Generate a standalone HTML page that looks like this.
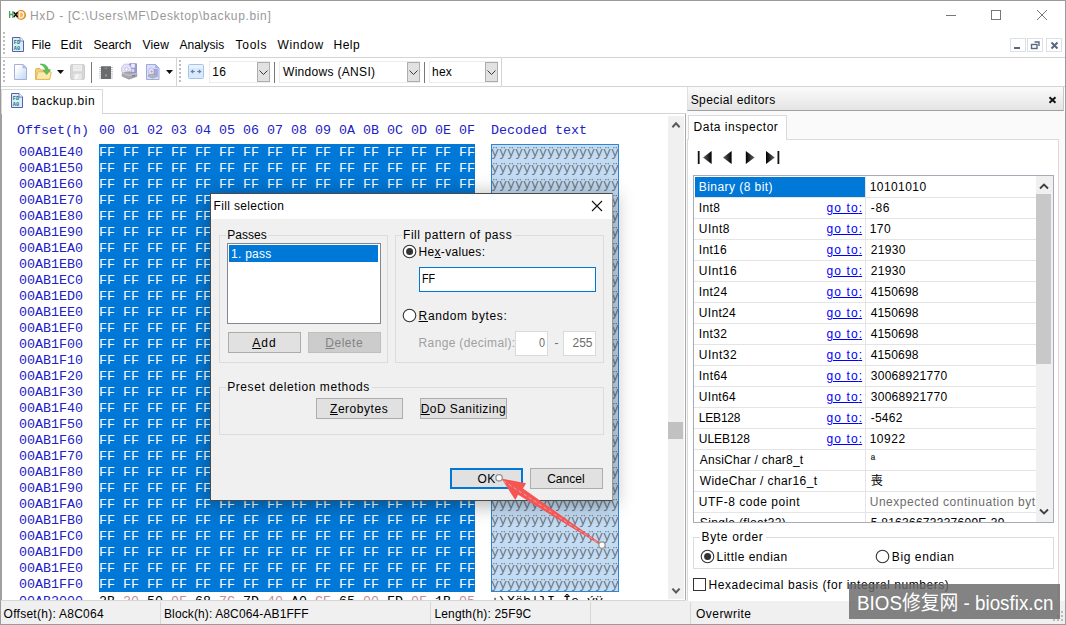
<!DOCTYPE html>
<html><head><meta charset="utf-8"><title>HxD</title>
<style>
html,body{margin:0;padding:0;}
body{width:1066px;height:625px;overflow:hidden;background:#fff;position:relative;font-family:"Liberation Sans","Noto Sans CJK SC",sans-serif;font-size:12px;color:#000;}
body div,body span.t,body svg{position:absolute;box-sizing:border-box;}
.t{white-space:pre;}
.m{font-family:"Liberation Mono",monospace;}
u{text-decoration:underline;text-underline-offset:1px;}
</style></head><body>
<div style="left:0px;top:0px;width:1066px;height:625px;border:1px solid #9b9b9b;background:#fff;"></div>
<span class="t" style="left:30.00px;top:9.00px;font-size:12px;line-height:14px;color:#999;letter-spacing:0.649px;">HxD - [C:\Users\MF\Desktop\backup.bin]</span>
<svg style="left:8px;top:8px" width="19" height="14" viewBox="8 8 19 14"><circle cx="21.1" cy="14.9" r="4.3" fill="#f3b35a" stroke="#e08a1c" stroke-width="1.3"/><path d="M9.6 11 V18 M12.9 11 V18 M9.6 14.5 H12.9" stroke="#4aa65a" stroke-width="1.3" fill="none"/><path d="M13.8 12.3 L17.6 17 M17.6 12.3 L13.8 17" stroke="#111" stroke-width="1.5"/><path d="M19.6 11.8 V17.8 H21 Q23.6 17.6 23.6 14.8 Q23.6 12 21 11.8 Z" fill="none" stroke="#f4f4f4" stroke-width="1.2"/></svg>
<svg style="left:940px;top:5px" width="120" height="22" viewBox="0 0 120 22"><path d="M6 10.5 H16" stroke="#777" stroke-width="1" fill="none"/><rect x="51.5" y="5.5" width="9" height="9" stroke="#777" fill="none"/><path d="M97 5 L107 15 M107 5 L97 15" stroke="#777" stroke-width="1" fill="none"/></svg>
<div style="left:1px;top:57px;width:1064px;height:1px;background:#d4d4d4;"></div>
<div style="left:3px;top:32px;width:2px;height:2px;background:#bdbdbd;"></div>
<div style="left:3px;top:36px;width:2px;height:2px;background:#bdbdbd;"></div>
<div style="left:3px;top:40px;width:2px;height:2px;background:#bdbdbd;"></div>
<div style="left:3px;top:44px;width:2px;height:2px;background:#bdbdbd;"></div>
<div style="left:3px;top:48px;width:2px;height:2px;background:#bdbdbd;"></div>
<div style="left:3px;top:52px;width:2px;height:2px;background:#bdbdbd;"></div>
<svg style="left:12px;top:37px" width="12" height="15" viewBox="0 0 12 15"><path d="M0.5 0.5 H8 L11.5 4 V14.5 H0.5 Z" fill="#dcebf9" stroke="#5a5fb0"/><path d="M8 0.5 V4 H11.5" fill="#fff" stroke="#5a5fb0" stroke-width="0.8"/><text x="1.8" y="7.3" font-size="5.2" font-weight="bold" fill="#0a7a70" font-family="Liberation Mono,monospace">FD</text><text x="1.8" y="12.6" font-size="5.2" font-weight="bold" fill="#0a7a70" font-family="Liberation Mono,monospace">A0</text></svg>
<span class="t" style="left:31.50px;top:38.00px;font-size:12px;line-height:14px;color:#000;">File</span>
<span class="t" style="left:60.50px;top:38.00px;font-size:12px;line-height:14px;color:#000;letter-spacing:0.333px;">Edit</span>
<span class="t" style="left:93.50px;top:38.00px;font-size:12px;line-height:14px;color:#000;">Search</span>
<span class="t" style="left:142.50px;top:38.00px;font-size:12px;line-height:14px;color:#000;letter-spacing:0.167px;">View</span>
<span class="t" style="left:179.50px;top:38.00px;font-size:12px;line-height:14px;color:#000;">Analysis</span>
<span class="t" style="left:235.50px;top:38.00px;font-size:12px;line-height:14px;color:#000;letter-spacing:0.750px;">Tools</span>
<span class="t" style="left:277.50px;top:38.00px;font-size:12px;line-height:14px;color:#000;letter-spacing:0.600px;">Window</span>
<span class="t" style="left:333.50px;top:38.00px;font-size:12px;line-height:14px;color:#000;letter-spacing:0.500px;">Help</span>
<div style="left:1010px;top:38px;width:16px;height:14px;border:1px solid #dcdfe3;background:#fff;"></div>
<div style="left:1027px;top:38px;width:16px;height:14px;border:1px solid #dcdfe3;background:#fff;"></div>
<div style="left:1046px;top:38px;width:16px;height:14px;border:1px solid #dcdfe3;background:#fff;"></div>
<svg style="left:1010px;top:38px" width="56" height="14" viewBox="0 0 56 14"><path d="M4 10 H10" stroke="#5b6980" stroke-width="2"/><path d="M24.5 4 H29 V8" stroke="#5b6980" stroke-width="1.4" fill="none"/><rect x="21.5" y="6.5" width="5.5" height="4" stroke="#5b6980" stroke-width="1.4" fill="none"/><path d="M41.5 4.5 L47.5 10.5 M47.5 4.5 L41.5 10.5" stroke="#5b6980" stroke-width="2"/></svg>
<div style="left:1px;top:86px;width:1064px;height:1px;background:#d4d4d4;"></div>
<div style="left:3px;top:60px;width:2px;height:2px;background:#bdbdbd;"></div>
<div style="left:3px;top:64px;width:2px;height:2px;background:#bdbdbd;"></div>
<div style="left:3px;top:68px;width:2px;height:2px;background:#bdbdbd;"></div>
<div style="left:3px;top:72px;width:2px;height:2px;background:#bdbdbd;"></div>
<div style="left:3px;top:76px;width:2px;height:2px;background:#bdbdbd;"></div>
<div style="left:3px;top:80px;width:2px;height:2px;background:#bdbdbd;"></div>
<div style="left:176px;top:58px;width:1px;height:28px;background:#d4d4d4;"></div>
<div style="left:179px;top:60px;width:2px;height:2px;background:#bdbdbd;"></div>
<div style="left:179px;top:64px;width:2px;height:2px;background:#bdbdbd;"></div>
<div style="left:179px;top:68px;width:2px;height:2px;background:#bdbdbd;"></div>
<div style="left:179px;top:72px;width:2px;height:2px;background:#bdbdbd;"></div>
<div style="left:179px;top:76px;width:2px;height:2px;background:#bdbdbd;"></div>
<div style="left:179px;top:80px;width:2px;height:2px;background:#bdbdbd;"></div>
<div style="left:501px;top:58px;width:1px;height:28px;background:#d4d4d4;"></div>
<svg style="left:14px;top:64px" width="13" height="16" viewBox="0 0 13 16"><defs><linearGradient id="gnew" x1="0" y1="0" x2="1" y2="1"><stop offset="0.2" stop-color="#fff"/><stop offset="1" stop-color="#bcd6f2"/></linearGradient></defs><path d="M0.5 0.5 H9 L12.5 4 V15.5 H0.5 Z" fill="url(#gnew)" stroke="#a9aedf"/><path d="M9 0.5 V4 H12.5 Z" fill="#a8cdf0" stroke="#a9aedf" stroke-width="0.7"/></svg>
<svg style="left:35px;top:63px" width="17" height="17" viewBox="0 0 17 17"><path d="M0.6 16.3 V6.8 Q0.6 5.6 1.8 5.6 H5 L6.3 7 H13.5 Q14.6 7 14.6 8.2 V16.3 Z" fill="#f3d583" stroke="#d9ab3d" stroke-width="0.9"/><path d="M1 16.4 L2.6 9.6 Q2.8 8.8 3.8 8.8 H15.6 Q16.5 8.8 16.2 9.7 L14.6 16.4 Z" fill="#fbeab0" stroke="#e0b64a" stroke-width="0.9"/><path d="M5.2 1.2 C9.5 0.6 13 3 13.3 7 L15.4 6.6 L11.8 11.6 L8.4 7.8 L10.6 7.5 C10.2 4.6 8.4 2.4 5.2 1.2 Z" fill="#5cc35a" stroke="#3ea33c" stroke-width="0.6"/></svg>
<svg style="left:57px;top:70px" width="7" height="4"><path d="M0 0 H7 L3.5 4 Z" fill="#111"/></svg>
<svg style="left:70px;top:64px" width="15" height="16" viewBox="0 0 15 16"><rect x="0.5" y="0.5" width="14" height="15" rx="1.5" fill="#d6d6d6" stroke="#cdcdcd"/><rect x="3" y="0.8" width="9" height="6.4" fill="#efefef"/><path d="M3.6 2.6H11.4M3.6 4.4H11.4" stroke="#e2e2e2" stroke-width="0.7"/><rect x="3.6" y="9.6" width="8" height="6" fill="#e9e9e9"/><path d="M5 15 L6.6 10.4 H8.6 L7 15 Z" fill="#fafafa"/></svg>
<div style="left:91px;top:62px;width:1px;height:21px;background:#777;"></div>
<svg style="left:98px;top:65px" width="16" height="15" viewBox="0 0 16 15"><rect x="3" y="1" width="10" height="13" fill="#6b6b6b"/><rect x="3" y="1" width="10" height="1" fill="#8a8a8a"/><path d="M1 2.5H3M1 4.6H3M1 6.7H3M1 8.8H3M1 10.9H3M1 13H3M13 2.5H15M13 4.6H15M13 6.7H15M13 8.8H15M13 10.9H15M13 13H15" stroke="#b4bfd4" stroke-width="0.9"/><rect x="6.5" y="2.6" width="3" height="1.2" fill="#8e8e8e"/><rect x="7" y="9.4" width="2" height="2" fill="#9a9a9a"/></svg>
<svg style="left:121px;top:63px" width="17" height="17" viewBox="0 0 17 17"><rect x="8.4" y="0.8" width="7" height="9.5" fill="#9a9ad8" stroke="#7d7dc4" stroke-width="0.7"/><rect x="10.2" y="1" width="3.6" height="3.6" fill="#eeeefa"/><rect x="10.6" y="6" width="2.6" height="3.4" fill="#d9d9f2"/><ellipse cx="5.4" cy="6.4" rx="5" ry="5.4" fill="#e4e2f8" stroke="#b4b2dc" stroke-width="0.7"/><ellipse cx="5.4" cy="6.4" rx="1.6" ry="1.8" fill="#fff" stroke="#b09ad0" stroke-width="0.6"/><path d="M1.2 10.2 L8 8.8 L15.8 10.4 V13.4 L8 16.2 L1.2 13.2 Z" fill="#a8a8ae" stroke="#8a8a90" stroke-width="0.6"/><path d="M1.2 10.2 L8 12.4 L15.8 10.4" fill="none" stroke="#d6d6da" stroke-width="0.7"/><rect x="11" y="12.2" width="3" height="1.2" fill="#6f6fb8"/></svg>
<svg style="left:146px;top:64px" width="14" height="16" viewBox="0 0 14 16"><path d="M0.5 0.5 H9.5 L13 4 V15.5 H0.5 Z" fill="#d3e4f8" stroke="#a3a6e0"/><path d="M9.5 0.5 V4 H13 Z" fill="#9cc6ee" stroke="#a3a6e0" stroke-width="0.7"/><ellipse cx="5.6" cy="7.6" rx="3.2" ry="3.6" fill="#e6e2f6" stroke="#b0a8d6" stroke-width="0.6"/><circle cx="5.6" cy="7.6" r="1" fill="#c88ad0"/><rect x="8" y="5.4" width="3.4" height="5" fill="#a8a8e0" stroke="#8a8ad0" stroke-width="0.5"/><path d="M2.4 10.8 L6.6 10 L11.4 10.8 V12.6 L6.6 14.2 L2.4 12.6 Z" fill="#b0b4bc" stroke="#9498a2" stroke-width="0.5"/></svg>
<svg style="left:166px;top:70px" width="7" height="4"><path d="M0 0 H7 L3.5 4 Z" fill="#111"/></svg>
<svg style="left:188px;top:64px" width="16" height="15" viewBox="0 0 16 15"><rect x="0.5" y="0.5" width="15" height="14" rx="1" fill="#dbe9f8" stroke="#a4c3ea"/><rect x="1" y="1" width="14" height="3" fill="#eaf2fb"/><path d="M2.4 7.5 L5.2 5.2 V9.8 Z M13.6 7.5 L10.8 5.2 V9.8 Z" fill="#5b83b8"/><path d="M4.6 7.5H6.8M9.2 7.5H11.4" stroke="#5b83b8" stroke-width="1.1"/></svg>
<div style="left:209px;top:61px;width:61px;height:22px;background:#fff;border:1px solid #ececec;"></div>
<div style="left:257px;top:62px;width:13px;height:20px;background:#e1e1e1;border:1px solid #adadad;"></div>
<svg style="left:259px;top:70px" width="9" height="6"><path d="M0.5 0.5 L4.5 4.5 L8.5 0.5" stroke="#3a3a3a" fill="none"/></svg>
<span class="t" style="left:212.20px;top:65.00px;font-size:12px;line-height:14px;color:#000;letter-spacing:0.500px;">16</span>
<div style="left:274px;top:62px;width:1px;height:21px;background:#777;"></div>
<div style="left:279px;top:61px;width:141px;height:22px;background:#fff;border:1px solid #ececec;"></div>
<div style="left:407px;top:62px;width:13px;height:20px;background:#e1e1e1;border:1px solid #adadad;"></div>
<svg style="left:409px;top:70px" width="9" height="6"><path d="M0.5 0.5 L4.5 4.5 L8.5 0.5" stroke="#3a3a3a" fill="none"/></svg>
<span class="t" style="left:283.00px;top:65.00px;font-size:12px;line-height:14px;color:#000;letter-spacing:0.308px;">Windows (ANSI)</span>
<div style="left:424px;top:62px;width:1px;height:21px;background:#777;"></div>
<div style="left:429px;top:61px;width:69px;height:22px;background:#fff;border:1px solid #ececec;"></div>
<div style="left:485px;top:62px;width:13px;height:20px;background:#e1e1e1;border:1px solid #adadad;"></div>
<svg style="left:487px;top:70px" width="9" height="6"><path d="M0.5 0.5 L4.5 4.5 L8.5 0.5" stroke="#3a3a3a" fill="none"/></svg>
<span class="t" style="left:432.00px;top:65.00px;font-size:12px;line-height:14px;color:#000;letter-spacing:0.250px;">hex</span>
<div style="left:102px;top:113px;width:584px;height:1px;background:#d4d4d4;"></div>
<div style="left:1px;top:89px;width:102px;height:25px;background:#fff;border:1px solid #d9d9d9;border-bottom:none;"></div>
<svg style="left:11px;top:93px" width="12" height="15" viewBox="0 0 12 15"><path d="M0.5 0.5 H8 L11.5 4 V14.5 H0.5 Z" fill="#dcebf9" stroke="#5a5fb0"/><path d="M8 0.5 V4 H11.5" fill="#fff" stroke="#5a5fb0" stroke-width="0.8"/><text x="1.8" y="7.3" font-size="5.2" font-weight="bold" fill="#0a7a70" font-family="Liberation Mono,monospace">FD</text><text x="1.8" y="12.6" font-size="5.2" font-weight="bold" fill="#0a7a70" font-family="Liberation Mono,monospace">A0</text></svg>
<span class="t" style="left:31.80px;top:94.00px;font-size:12px;line-height:14px;color:#000;letter-spacing:0.533px;">backup.bin</span>
<div style="left:0px;top:114px;width:2px;height:487px;background:#a0a0a0;"></div>
<span class="t m" style="left:17px;top:123.00px;font-size:13.333px;line-height:15px;color:#2020c8;">Offset(h)</span>
<span class="t m" style="left:99px;top:123.00px;font-size:13.333px;line-height:15px;color:#2020c8;">00 01 02 03 04 05 06 07 08 09 0A 0B 0C 0D 0E 0F</span>
<span class="t m" style="left:491px;top:123.00px;font-size:13.333px;line-height:15px;color:#2020c8;">Decoded text</span>
<div style="left:99px;top:144px;width:376px;height:448px;background:#0078d7;"></div>
<div style="left:491px;top:144px;width:128px;height:448px;background:#c3dcf3;border:1px solid #2a86d9;"></div>
<span class="t m" style="left:19px;top:145.00px;font-size:13.333px;line-height:15px;color:#2020c8;">00AB1E40</span>
<span class="t m" style="left:99px;top:145.00px;font-size:13.333px;line-height:15px;color:#fff;">FF FF FF FF FF FF FF FF FF FF FF FF FF FF FF FF</span>
<span class="t m" style="left:491px;top:145.00px;font-size:13.333px;line-height:15px;color:#6a747e;">ÿÿÿÿÿÿÿÿÿÿÿÿÿÿÿÿ</span>
<span class="t m" style="left:19px;top:161.00px;font-size:13.333px;line-height:15px;color:#2020c8;">00AB1E50</span>
<span class="t m" style="left:99px;top:161.00px;font-size:13.333px;line-height:15px;color:#fff;">FF FF FF FF FF FF FF FF FF FF FF FF FF FF FF FF</span>
<span class="t m" style="left:491px;top:161.00px;font-size:13.333px;line-height:15px;color:#6a747e;">ÿÿÿÿÿÿÿÿÿÿÿÿÿÿÿÿ</span>
<span class="t m" style="left:19px;top:177.00px;font-size:13.333px;line-height:15px;color:#2020c8;">00AB1E60</span>
<span class="t m" style="left:99px;top:177.00px;font-size:13.333px;line-height:15px;color:#fff;">FF FF FF FF FF FF FF FF FF FF FF FF FF FF FF FF</span>
<span class="t m" style="left:491px;top:177.00px;font-size:13.333px;line-height:15px;color:#6a747e;">ÿÿÿÿÿÿÿÿÿÿÿÿÿÿÿÿ</span>
<span class="t m" style="left:19px;top:193.00px;font-size:13.333px;line-height:15px;color:#2020c8;">00AB1E70</span>
<span class="t m" style="left:99px;top:193.00px;font-size:13.333px;line-height:15px;color:#fff;">FF FF FF FF FF FF FF FF FF FF FF FF FF FF FF FF</span>
<span class="t m" style="left:491px;top:193.00px;font-size:13.333px;line-height:15px;color:#6a747e;">ÿÿÿÿÿÿÿÿÿÿÿÿÿÿÿÿ</span>
<span class="t m" style="left:19px;top:209.00px;font-size:13.333px;line-height:15px;color:#2020c8;">00AB1E80</span>
<span class="t m" style="left:99px;top:209.00px;font-size:13.333px;line-height:15px;color:#fff;">FF FF FF FF FF FF FF FF FF FF FF FF FF FF FF FF</span>
<span class="t m" style="left:491px;top:209.00px;font-size:13.333px;line-height:15px;color:#6a747e;">ÿÿÿÿÿÿÿÿÿÿÿÿÿÿÿÿ</span>
<span class="t m" style="left:19px;top:225.00px;font-size:13.333px;line-height:15px;color:#2020c8;">00AB1E90</span>
<span class="t m" style="left:99px;top:225.00px;font-size:13.333px;line-height:15px;color:#fff;">FF FF FF FF FF FF FF FF FF FF FF FF FF FF FF FF</span>
<span class="t m" style="left:491px;top:225.00px;font-size:13.333px;line-height:15px;color:#6a747e;">ÿÿÿÿÿÿÿÿÿÿÿÿÿÿÿÿ</span>
<span class="t m" style="left:19px;top:241.00px;font-size:13.333px;line-height:15px;color:#2020c8;">00AB1EA0</span>
<span class="t m" style="left:99px;top:241.00px;font-size:13.333px;line-height:15px;color:#fff;">FF FF FF FF FF FF FF FF FF FF FF FF FF FF FF FF</span>
<span class="t m" style="left:491px;top:241.00px;font-size:13.333px;line-height:15px;color:#6a747e;">ÿÿÿÿÿÿÿÿÿÿÿÿÿÿÿÿ</span>
<span class="t m" style="left:19px;top:257.00px;font-size:13.333px;line-height:15px;color:#2020c8;">00AB1EB0</span>
<span class="t m" style="left:99px;top:257.00px;font-size:13.333px;line-height:15px;color:#fff;">FF FF FF FF FF FF FF FF FF FF FF FF FF FF FF FF</span>
<span class="t m" style="left:491px;top:257.00px;font-size:13.333px;line-height:15px;color:#6a747e;">ÿÿÿÿÿÿÿÿÿÿÿÿÿÿÿÿ</span>
<span class="t m" style="left:19px;top:273.00px;font-size:13.333px;line-height:15px;color:#2020c8;">00AB1EC0</span>
<span class="t m" style="left:99px;top:273.00px;font-size:13.333px;line-height:15px;color:#fff;">FF FF FF FF FF FF FF FF FF FF FF FF FF FF FF FF</span>
<span class="t m" style="left:491px;top:273.00px;font-size:13.333px;line-height:15px;color:#6a747e;">ÿÿÿÿÿÿÿÿÿÿÿÿÿÿÿÿ</span>
<span class="t m" style="left:19px;top:289.00px;font-size:13.333px;line-height:15px;color:#2020c8;">00AB1ED0</span>
<span class="t m" style="left:99px;top:289.00px;font-size:13.333px;line-height:15px;color:#fff;">FF FF FF FF FF FF FF FF FF FF FF FF FF FF FF FF</span>
<span class="t m" style="left:491px;top:289.00px;font-size:13.333px;line-height:15px;color:#6a747e;">ÿÿÿÿÿÿÿÿÿÿÿÿÿÿÿÿ</span>
<span class="t m" style="left:19px;top:305.00px;font-size:13.333px;line-height:15px;color:#2020c8;">00AB1EE0</span>
<span class="t m" style="left:99px;top:305.00px;font-size:13.333px;line-height:15px;color:#fff;">FF FF FF FF FF FF FF FF FF FF FF FF FF FF FF FF</span>
<span class="t m" style="left:491px;top:305.00px;font-size:13.333px;line-height:15px;color:#6a747e;">ÿÿÿÿÿÿÿÿÿÿÿÿÿÿÿÿ</span>
<span class="t m" style="left:19px;top:321.00px;font-size:13.333px;line-height:15px;color:#2020c8;">00AB1EF0</span>
<span class="t m" style="left:99px;top:321.00px;font-size:13.333px;line-height:15px;color:#fff;">FF FF FF FF FF FF FF FF FF FF FF FF FF FF FF FF</span>
<span class="t m" style="left:491px;top:321.00px;font-size:13.333px;line-height:15px;color:#6a747e;">ÿÿÿÿÿÿÿÿÿÿÿÿÿÿÿÿ</span>
<span class="t m" style="left:19px;top:337.00px;font-size:13.333px;line-height:15px;color:#2020c8;">00AB1F00</span>
<span class="t m" style="left:99px;top:337.00px;font-size:13.333px;line-height:15px;color:#fff;">FF FF FF FF FF FF FF FF FF FF FF FF FF FF FF FF</span>
<span class="t m" style="left:491px;top:337.00px;font-size:13.333px;line-height:15px;color:#6a747e;">ÿÿÿÿÿÿÿÿÿÿÿÿÿÿÿÿ</span>
<span class="t m" style="left:19px;top:353.00px;font-size:13.333px;line-height:15px;color:#2020c8;">00AB1F10</span>
<span class="t m" style="left:99px;top:353.00px;font-size:13.333px;line-height:15px;color:#fff;">FF FF FF FF FF FF FF FF FF FF FF FF FF FF FF FF</span>
<span class="t m" style="left:491px;top:353.00px;font-size:13.333px;line-height:15px;color:#6a747e;">ÿÿÿÿÿÿÿÿÿÿÿÿÿÿÿÿ</span>
<span class="t m" style="left:19px;top:369.00px;font-size:13.333px;line-height:15px;color:#2020c8;">00AB1F20</span>
<span class="t m" style="left:99px;top:369.00px;font-size:13.333px;line-height:15px;color:#fff;">FF FF FF FF FF FF FF FF FF FF FF FF FF FF FF FF</span>
<span class="t m" style="left:491px;top:369.00px;font-size:13.333px;line-height:15px;color:#6a747e;">ÿÿÿÿÿÿÿÿÿÿÿÿÿÿÿÿ</span>
<span class="t m" style="left:19px;top:385.00px;font-size:13.333px;line-height:15px;color:#2020c8;">00AB1F30</span>
<span class="t m" style="left:99px;top:385.00px;font-size:13.333px;line-height:15px;color:#fff;">FF FF FF FF FF FF FF FF FF FF FF FF FF FF FF FF</span>
<span class="t m" style="left:491px;top:385.00px;font-size:13.333px;line-height:15px;color:#6a747e;">ÿÿÿÿÿÿÿÿÿÿÿÿÿÿÿÿ</span>
<span class="t m" style="left:19px;top:401.00px;font-size:13.333px;line-height:15px;color:#2020c8;">00AB1F40</span>
<span class="t m" style="left:99px;top:401.00px;font-size:13.333px;line-height:15px;color:#fff;">FF FF FF FF FF FF FF FF FF FF FF FF FF FF FF FF</span>
<span class="t m" style="left:491px;top:401.00px;font-size:13.333px;line-height:15px;color:#6a747e;">ÿÿÿÿÿÿÿÿÿÿÿÿÿÿÿÿ</span>
<span class="t m" style="left:19px;top:417.00px;font-size:13.333px;line-height:15px;color:#2020c8;">00AB1F50</span>
<span class="t m" style="left:99px;top:417.00px;font-size:13.333px;line-height:15px;color:#fff;">FF FF FF FF FF FF FF FF FF FF FF FF FF FF FF FF</span>
<span class="t m" style="left:491px;top:417.00px;font-size:13.333px;line-height:15px;color:#6a747e;">ÿÿÿÿÿÿÿÿÿÿÿÿÿÿÿÿ</span>
<span class="t m" style="left:19px;top:433.00px;font-size:13.333px;line-height:15px;color:#2020c8;">00AB1F60</span>
<span class="t m" style="left:99px;top:433.00px;font-size:13.333px;line-height:15px;color:#fff;">FF FF FF FF FF FF FF FF FF FF FF FF FF FF FF FF</span>
<span class="t m" style="left:491px;top:433.00px;font-size:13.333px;line-height:15px;color:#6a747e;">ÿÿÿÿÿÿÿÿÿÿÿÿÿÿÿÿ</span>
<span class="t m" style="left:19px;top:449.00px;font-size:13.333px;line-height:15px;color:#2020c8;">00AB1F70</span>
<span class="t m" style="left:99px;top:449.00px;font-size:13.333px;line-height:15px;color:#fff;">FF FF FF FF FF FF FF FF FF FF FF FF FF FF FF FF</span>
<span class="t m" style="left:491px;top:449.00px;font-size:13.333px;line-height:15px;color:#6a747e;">ÿÿÿÿÿÿÿÿÿÿÿÿÿÿÿÿ</span>
<span class="t m" style="left:19px;top:465.00px;font-size:13.333px;line-height:15px;color:#2020c8;">00AB1F80</span>
<span class="t m" style="left:99px;top:465.00px;font-size:13.333px;line-height:15px;color:#fff;">FF FF FF FF FF FF FF FF FF FF FF FF FF FF FF FF</span>
<span class="t m" style="left:491px;top:465.00px;font-size:13.333px;line-height:15px;color:#6a747e;">ÿÿÿÿÿÿÿÿÿÿÿÿÿÿÿÿ</span>
<span class="t m" style="left:19px;top:481.00px;font-size:13.333px;line-height:15px;color:#2020c8;">00AB1F90</span>
<span class="t m" style="left:99px;top:481.00px;font-size:13.333px;line-height:15px;color:#fff;">FF FF FF FF FF FF FF FF FF FF FF FF FF FF FF FF</span>
<span class="t m" style="left:491px;top:481.00px;font-size:13.333px;line-height:15px;color:#6a747e;">ÿÿÿÿÿÿÿÿÿÿÿÿÿÿÿÿ</span>
<span class="t m" style="left:19px;top:497.00px;font-size:13.333px;line-height:15px;color:#2020c8;">00AB1FA0</span>
<span class="t m" style="left:99px;top:497.00px;font-size:13.333px;line-height:15px;color:#fff;">FF FF FF FF FF FF FF FF FF FF FF FF FF FF FF FF</span>
<span class="t m" style="left:491px;top:497.00px;font-size:13.333px;line-height:15px;color:#6a747e;">ÿÿÿÿÿÿÿÿÿÿÿÿÿÿÿÿ</span>
<span class="t m" style="left:19px;top:513.00px;font-size:13.333px;line-height:15px;color:#2020c8;">00AB1FB0</span>
<span class="t m" style="left:99px;top:513.00px;font-size:13.333px;line-height:15px;color:#fff;">FF FF FF FF FF FF FF FF FF FF FF FF FF FF FF FF</span>
<span class="t m" style="left:491px;top:513.00px;font-size:13.333px;line-height:15px;color:#6a747e;">ÿÿÿÿÿÿÿÿÿÿÿÿÿÿÿÿ</span>
<span class="t m" style="left:19px;top:529.00px;font-size:13.333px;line-height:15px;color:#2020c8;">00AB1FC0</span>
<span class="t m" style="left:99px;top:529.00px;font-size:13.333px;line-height:15px;color:#fff;">FF FF FF FF FF FF FF FF FF FF FF FF FF FF FF FF</span>
<span class="t m" style="left:491px;top:529.00px;font-size:13.333px;line-height:15px;color:#6a747e;">ÿÿÿÿÿÿÿÿÿÿÿÿÿÿÿÿ</span>
<span class="t m" style="left:19px;top:545.00px;font-size:13.333px;line-height:15px;color:#2020c8;">00AB1FD0</span>
<span class="t m" style="left:99px;top:545.00px;font-size:13.333px;line-height:15px;color:#fff;">FF FF FF FF FF FF FF FF FF FF FF FF FF FF FF FF</span>
<span class="t m" style="left:491px;top:545.00px;font-size:13.333px;line-height:15px;color:#6a747e;">ÿÿÿÿÿÿÿÿÿÿÿÿÿÿÿÿ</span>
<span class="t m" style="left:19px;top:561.00px;font-size:13.333px;line-height:15px;color:#2020c8;">00AB1FE0</span>
<span class="t m" style="left:99px;top:561.00px;font-size:13.333px;line-height:15px;color:#fff;">FF FF FF FF FF FF FF FF FF FF FF FF FF FF FF FF</span>
<span class="t m" style="left:491px;top:561.00px;font-size:13.333px;line-height:15px;color:#6a747e;">ÿÿÿÿÿÿÿÿÿÿÿÿÿÿÿÿ</span>
<span class="t m" style="left:19px;top:577.00px;font-size:13.333px;line-height:15px;color:#2020c8;">00AB1FF0</span>
<span class="t m" style="left:99px;top:577.00px;font-size:13.333px;line-height:15px;color:#fff;">FF FF FF FF FF FF FF FF FF FF FF FF FF FF FF FF</span>
<span class="t m" style="left:491px;top:577.00px;font-size:13.333px;line-height:15px;color:#6a747e;">ÿÿÿÿÿÿÿÿÿÿÿÿÿÿÿÿ</span>
<div style="left:2px;top:592px;width:664px;height:8px;overflow:hidden;">
<span class="t m" style="left:17px;top:2.00px;font-size:13.333px;line-height:15px;color:#2020c8;">00AB2000</span>
<span class="t m" style="left:97px;top:2.00px;font-size:13.333px;line-height:15px;color:#000;">2B <span style="color:#c48a98">20</span> 50 <span style="color:#c48a98">0F</span> 68 <span style="color:#c48a98">7C</span> 7D <span style="color:#c48a98">40</span> A0 <span style="color:#c48a98">CE</span> 65 <span style="color:#c48a98">00</span> FD <span style="color:#c48a98">0F</span> 1B <span style="color:#c48a98">05</span></span>
<span class="t m" style="left:489px;top:2.00px;font-size:13.333px;line-height:15px;color:#000;">+\Xëh|}I.Îe.ýÿ..</span>
</div>
<div style="left:668px;top:116px;width:16px;height:483px;background:#f0f0f0;"></div>
<div style="left:685px;top:114px;width:1px;height:487px;background:#a6aab0;"></div>
<div style="left:0px;top:600px;width:686px;height:1px;background:#a6aab0;"></div>
<svg style="left:671px;top:121px" width="10" height="8"><path d="M1.4 6.2 L5 2.4 L8.6 6.2" stroke="#5a5a5a" stroke-width="2.1" fill="none"/></svg>
<svg style="left:671px;top:587px" width="10" height="8"><path d="M1.4 1.6 L5 5.4 L8.6 1.6" stroke="#5a5a5a" stroke-width="2.1" fill="none"/></svg>
<div style="left:668px;top:422px;width:15px;height:17px;background:#c1c1c1;"></div>
<div style="left:1px;top:600px;width:1064px;height:24px;background:#f0f0f0;border-top:1px solid #d7d7d7;"></div>
<div style="left:160px;top:602px;width:1px;height:22px;background:#d7d7d7;"></div>
<div style="left:430px;top:602px;width:1px;height:22px;background:#d7d7d7;"></div>
<div style="left:590px;top:602px;width:1px;height:22px;background:#d7d7d7;"></div>
<div style="left:690px;top:602px;width:1px;height:22px;background:#d7d7d7;"></div>
<span class="t" style="left:3.60px;top:607.00px;font-size:12px;line-height:14px;color:#000;letter-spacing:0.263px;">Offset(h): A8C064</span>
<span class="t" style="left:164.00px;top:607.00px;font-size:12px;line-height:14px;color:#000;letter-spacing:0.118px;">Block(h): A8C064-AB1FFF</span>
<span class="t" style="left:434.40px;top:607.00px;font-size:12px;line-height:14px;color:#000;letter-spacing:0.187px;">Length(h): 25F9C</span>
<span class="t" style="left:696.00px;top:607.00px;font-size:12px;line-height:14px;color:#000;letter-spacing:0.463px;">Overwrite</span>
<div style="left:686px;top:110px;width:379px;height:491px;background:#fafafa;"></div>
<div style="left:687px;top:87px;width:377px;height:24px;background:linear-gradient(#fbfbfb,#e4e4e4);border-bottom:1px solid #a0a0a0;border-left:1px solid #e0e0e0;border-right:1px solid #c8c8c8;"></div>
<span class="t" style="left:690.70px;top:93.00px;font-size:12px;line-height:14px;color:#000;letter-spacing:0.414px;">Special editors</span>
<svg style="left:1048px;top:96px" width="9" height="8"><path d="M1.5 1.2 L7.5 6.8 M7.5 1.2 L1.5 6.8" stroke="#111" stroke-width="1.9"/></svg>
<div style="left:687px;top:139px;width:372px;height:462px;background:#fff;border:1px solid #dadada;border-bottom:none;"></div>
<div style="left:688px;top:115px;width:99px;height:25px;background:#fff;border:1px solid #dadada;border-bottom:none;"></div>
<span class="t" style="left:693.50px;top:120.00px;font-size:12px;line-height:14px;color:#000;letter-spacing:0.538px;">Data inspector</span>
<svg style="left:696px;top:150px" width="86" height="15" viewBox="0 0 86 15"><defs><linearGradient id="gl" x1="0" x2="1"><stop offset="0" stop-color="#666"/><stop offset="1" stop-color="#000"/></linearGradient><linearGradient id="gr" x1="0" x2="1"><stop offset="0" stop-color="#000"/><stop offset="1" stop-color="#666"/></linearGradient></defs><rect x="1.8" y="1" width="1.8" height="13" fill="#111"/><path d="M15.6 1 V14 L7 7.5 Z" fill="url(#gl)"/><path d="M35.6 1 V14 L27 7.5 Z" fill="url(#gl)"/><path d="M49.8 1 V14 L58.6 7.5 Z" fill="url(#gr)"/><path d="M70 1 V14 L78.8 7.5 Z" fill="url(#gr)"/><rect x="81.5" y="1" width="1.8" height="13" fill="#111"/></svg>
<div style="left:693px;top:175px;width:361px;height:348px;background:#fff;border:1px solid #a5acb5;"></div>
<div style="left:694px;top:176px;width:342px;height:346px;overflow:hidden;">
<div style="left:1px;top:1px;width:170px;height:20px;background:#0078d7;"></div>
<div style="left:0px;top:21px;width:342px;height:1px;background:#e4e4e4;"></div>
<span class="t" style="left:4.80px;top:4.00px;font-size:12px;line-height:14px;color:#fff;letter-spacing:0.438px;">Binary (8 bit)</span>
<span class="t" style="left:175.70px;top:4.00px;font-size:12px;line-height:14px;color:#000;letter-spacing:0.429px;">10101010</span>
<div style="left:0px;top:42px;width:342px;height:1px;background:#e4e4e4;"></div>
<span class="t" style="left:4.80px;top:25.00px;font-size:12px;line-height:14px;color:#000;letter-spacing:0.400px;">Int8</span>
<span class="t" style="left:132.40px;top:25.00px;font-size:12px;line-height:14px;color:#0000ff;letter-spacing:1.140px;text-decoration:underline;">go to<span style="letter-spacing:0">:</span></span>
<span class="t" style="left:176.70px;top:25.00px;font-size:12px;line-height:14px;color:#000;letter-spacing:0.700px;">-86</span>
<div style="left:0px;top:63px;width:342px;height:1px;background:#e4e4e4;"></div>
<span class="t" style="left:4.80px;top:46.00px;font-size:12px;line-height:14px;color:#000;letter-spacing:0.500px;">UInt8</span>
<span class="t" style="left:132.40px;top:46.00px;font-size:12px;line-height:14px;color:#0000ff;letter-spacing:1.140px;text-decoration:underline;">go to<span style="letter-spacing:0">:</span></span>
<span class="t" style="left:175.70px;top:46.00px;font-size:12px;line-height:14px;color:#000;letter-spacing:0.500px;">170</span>
<div style="left:0px;top:84px;width:342px;height:1px;background:#e4e4e4;"></div>
<span class="t" style="left:4.80px;top:67.00px;font-size:12px;line-height:14px;color:#000;letter-spacing:0.325px;">Int16</span>
<span class="t" style="left:132.40px;top:67.00px;font-size:12px;line-height:14px;color:#0000ff;letter-spacing:1.140px;text-decoration:underline;">go to<span style="letter-spacing:0">:</span></span>
<span class="t" style="left:176.70px;top:67.00px;font-size:12px;line-height:14px;color:#000;letter-spacing:0.325px;">21930</span>
<div style="left:0px;top:105px;width:342px;height:1px;background:#e4e4e4;"></div>
<span class="t" style="left:4.80px;top:88.00px;font-size:12px;line-height:14px;color:#000;letter-spacing:0.500px;">UInt16</span>
<span class="t" style="left:132.40px;top:88.00px;font-size:12px;line-height:14px;color:#0000ff;letter-spacing:1.140px;text-decoration:underline;">go to<span style="letter-spacing:0">:</span></span>
<span class="t" style="left:176.70px;top:88.00px;font-size:12px;line-height:14px;color:#000;letter-spacing:0.325px;">21930</span>
<div style="left:0px;top:126px;width:342px;height:1px;background:#e4e4e4;"></div>
<span class="t" style="left:4.80px;top:109.00px;font-size:12px;line-height:14px;color:#000;letter-spacing:0.400px;">Int24</span>
<span class="t" style="left:132.40px;top:109.00px;font-size:12px;line-height:14px;color:#0000ff;letter-spacing:1.140px;text-decoration:underline;">go to<span style="letter-spacing:0">:</span></span>
<span class="t" style="left:176.70px;top:109.00px;font-size:12px;line-height:14px;color:#000;letter-spacing:0.167px;">4150698</span>
<div style="left:0px;top:147px;width:342px;height:1px;background:#e4e4e4;"></div>
<span class="t" style="left:4.80px;top:130.00px;font-size:12px;line-height:14px;color:#000;letter-spacing:0.320px;">UInt24</span>
<span class="t" style="left:132.40px;top:130.00px;font-size:12px;line-height:14px;color:#0000ff;letter-spacing:1.140px;text-decoration:underline;">go to<span style="letter-spacing:0">:</span></span>
<span class="t" style="left:176.70px;top:130.00px;font-size:12px;line-height:14px;color:#000;letter-spacing:0.167px;">4150698</span>
<div style="left:0px;top:168px;width:342px;height:1px;background:#e4e4e4;"></div>
<span class="t" style="left:4.80px;top:151.00px;font-size:12px;line-height:14px;color:#000;letter-spacing:0.375px;">Int32</span>
<span class="t" style="left:132.40px;top:151.00px;font-size:12px;line-height:14px;color:#0000ff;letter-spacing:1.140px;text-decoration:underline;">go to<span style="letter-spacing:0">:</span></span>
<span class="t" style="left:176.70px;top:151.00px;font-size:12px;line-height:14px;color:#000;letter-spacing:0.167px;">4150698</span>
<div style="left:0px;top:189px;width:342px;height:1px;background:#e4e4e4;"></div>
<span class="t" style="left:4.80px;top:172.00px;font-size:12px;line-height:14px;color:#000;letter-spacing:0.500px;">UInt32</span>
<span class="t" style="left:132.40px;top:172.00px;font-size:12px;line-height:14px;color:#0000ff;letter-spacing:1.140px;text-decoration:underline;">go to<span style="letter-spacing:0">:</span></span>
<span class="t" style="left:176.70px;top:172.00px;font-size:12px;line-height:14px;color:#000;letter-spacing:0.167px;">4150698</span>
<div style="left:0px;top:210px;width:342px;height:1px;background:#e4e4e4;"></div>
<span class="t" style="left:4.80px;top:193.00px;font-size:12px;line-height:14px;color:#000;letter-spacing:0.425px;">Int64</span>
<span class="t" style="left:132.40px;top:193.00px;font-size:12px;line-height:14px;color:#0000ff;letter-spacing:1.140px;text-decoration:underline;">go to<span style="letter-spacing:0">:</span></span>
<span class="t" style="left:176.70px;top:193.00px;font-size:12px;line-height:14px;color:#000;letter-spacing:0.300px;">30068921770</span>
<div style="left:0px;top:231px;width:342px;height:1px;background:#e4e4e4;"></div>
<span class="t" style="left:4.80px;top:214.00px;font-size:12px;line-height:14px;color:#000;letter-spacing:0.300px;">UInt64</span>
<span class="t" style="left:132.40px;top:214.00px;font-size:12px;line-height:14px;color:#0000ff;letter-spacing:1.140px;text-decoration:underline;">go to<span style="letter-spacing:0">:</span></span>
<span class="t" style="left:176.70px;top:214.00px;font-size:12px;line-height:14px;color:#000;letter-spacing:0.300px;">30068921770</span>
<div style="left:0px;top:252px;width:342px;height:1px;background:#e4e4e4;"></div>
<span class="t" style="left:4.80px;top:235.00px;font-size:12px;line-height:14px;color:#000;letter-spacing:-0.200px;">LEB128</span>
<span class="t" style="left:132.40px;top:235.00px;font-size:12px;line-height:14px;color:#0000ff;letter-spacing:1.140px;text-decoration:underline;">go to<span style="letter-spacing:0">:</span></span>
<span class="t" style="left:176.70px;top:235.00px;font-size:12px;line-height:14px;color:#000;letter-spacing:0.250px;">-5462</span>
<div style="left:0px;top:273px;width:342px;height:1px;background:#e4e4e4;"></div>
<span class="t" style="left:4.80px;top:256.00px;font-size:12px;line-height:14px;color:#000;letter-spacing:-0.050px;">ULEB128</span>
<span class="t" style="left:132.40px;top:256.00px;font-size:12px;line-height:14px;color:#0000ff;letter-spacing:1.140px;text-decoration:underline;">go to<span style="letter-spacing:0">:</span></span>
<span class="t" style="left:175.70px;top:256.00px;font-size:12px;line-height:14px;color:#000;letter-spacing:0.500px;">10922</span>
<div style="left:0px;top:294px;width:342px;height:1px;background:#e4e4e4;"></div>
<span class="t" style="left:5.80px;top:277.00px;font-size:12px;line-height:14px;color:#000;letter-spacing:0.235px;">AnsiChar / char8_t</span>
<span class="t" style="left:176.7px;top:277.00px;font-size:12px;line-height:14px;color:#000;">ª</span>
<div style="left:0px;top:315px;width:342px;height:1px;background:#e4e4e4;"></div>
<span class="t" style="left:5.80px;top:298.00px;font-size:12px;line-height:14px;color:#000;letter-spacing:0.400px;">WideChar / char16_t</span>
<span class="t" style="left:176.7px;top:298.00px;font-size:12px;line-height:14px;color:#000;font-family:Liberation Sans,Noto Sans CJK JP,sans-serif;">喪</span>
<div style="left:0px;top:336px;width:342px;height:1px;background:#e4e4e4;"></div>
<span class="t" style="left:4.80px;top:319.00px;font-size:12px;line-height:14px;color:#000;letter-spacing:0.533px;">UTF-8 code point</span>
<span class="t" style="left:175.70px;top:319.00px;font-size:12px;line-height:14px;color:#6d6d6d;letter-spacing:0.538px;">Unexpected continuation byt</span>
<div style="left:0px;top:357px;width:342px;height:1px;background:#e4e4e4;"></div>
<span class="t" style="left:5.80px;top:340.00px;font-size:12px;line-height:14px;color:#000;letter-spacing:0.353px;">Single (float32)</span>
<span class="t" style="left:176.70px;top:340.00px;font-size:12px;line-height:14px;color:#000;letter-spacing:0.263px;">5.81636673337609E-39</span>
<div style="left:171px;top:0px;width:1px;height:346px;background:#e4e4e4;"></div>
</div>
<div style="left:1036px;top:176px;width:17px;height:346px;background:#f0f0f0;"></div>
<svg style="left:1039px;top:183px" width="10" height="7"><path d="M1 5.5 L5 1.5 L9 5.5" stroke="#404040" stroke-width="1.8" fill="none"/></svg>
<svg style="left:1039px;top:508px" width="10" height="7"><path d="M1 1.5 L5 5.5 L9 1.5" stroke="#404040" stroke-width="1.8" fill="none"/></svg>
<div style="left:1036px;top:194px;width:15px;height:170px;background:#c8c8c8;"></div>
<div style="left:693px;top:537px;width:361px;height:32px;border:1px solid #dcdcdc;background:#fff;"></div>
<div style="left:700px;top:530px;width:66px;height:14px;background:#fff;"></div>
<span class="t" style="left:701.50px;top:530.00px;font-size:12px;line-height:14px;color:#000;letter-spacing:0.667px;">Byte order</span>
<svg style="left:700px;top:549px" width="15" height="15"><circle cx="7.5" cy="7.5" r="6.3" fill="#fff" stroke="#333" stroke-width="1.1"/><circle cx="7.6" cy="7.5" r="3.5" fill="#333"/></svg>
<span class="t" style="left:716.50px;top:550.00px;font-size:12px;line-height:14px;color:#000;letter-spacing:0.500px;">Little endian</span>
<svg style="left:875px;top:549px" width="15" height="15"><circle cx="7.5" cy="7.5" r="6.3" fill="#fff" stroke="#333" stroke-width="1.1"/></svg>
<span class="t" style="left:891.80px;top:550.00px;font-size:12px;line-height:14px;color:#000;letter-spacing:0.600px;">Big endian</span>
<div style="left:693px;top:578px;width:13px;height:13px;border:1px solid #333;background:#fff;"></div>
<span class="t" style="left:708.60px;top:578.00px;font-size:12px;line-height:14px;color:#000;letter-spacing:0.551px;">Hexadecimal basis (for integral numbers)</span>
<div style="left:210px;top:193px;width:403px;height:308px;background:#f0f0f0;border:1px solid #4a4a4a;border-right-color:#9a9a9a;box-shadow:0 3px 18px 2px rgba(0,0,0,0.30);"></div>
<div style="left:211px;top:194px;width:401px;height:25px;background:#fff;"></div>
<span class="t" style="left:213.60px;top:199.00px;font-size:12px;line-height:14px;color:#000;letter-spacing:0.331px;">Fill selection</span>
<svg style="left:591px;top:200px" width="12" height="12"><path d="M1 1 L11 11 M11 1 L1 11" stroke="#111" stroke-width="1.1"/></svg>
<div style="left:219px;top:235px;width:169px;height:128px;border:1px solid #dcdcdc;"></div>
<div style="left:226.2px;top:228px;width:42.2px;height:14px;background:#f0f0f0;"></div>
<span class="t" style="left:227.20px;top:228.00px;font-size:12px;line-height:14px;color:#000;letter-spacing:0.040px;">Passes</span>
<div style="left:227px;top:243px;width:154px;height:81px;background:#fff;border:1px solid #828790;"></div>
<div style="left:229px;top:245px;width:149px;height:17px;background:#0078d7;"></div>
<span class="t" style="left:231.10px;top:247.00px;font-size:12px;line-height:14px;color:#fff;letter-spacing:0.233px;">1. pass</span>
<div style="left:228px;top:332px;width:73px;height:21px;background:#e1e1e1;border:1px solid #adadad;"></div>
<span class="t" style="left:252.20px;top:336.00px;font-size:12px;line-height:14px;color:#000;letter-spacing:1.050px;"><u>A</u>dd</span>
<div style="left:308px;top:332px;width:73px;height:21px;background:#cccccc;border:1px solid #bfbfbf;"></div>
<span class="t" style="left:325.30px;top:336.00px;font-size:12px;line-height:14px;color:#838383;letter-spacing:0.520px;"><u>D</u>elete</span>
<div style="left:395px;top:235px;width:209px;height:128px;border:1px solid #dcdcdc;"></div>
<div style="left:402px;top:228px;width:111.6px;height:14px;background:#f0f0f0;"></div>
<span class="t" style="left:403.00px;top:228.00px;font-size:12px;line-height:14px;color:#000;letter-spacing:0.558px;">Fill pattern of pass</span>
<svg style="left:402px;top:244px" width="15" height="15"><circle cx="7.5" cy="7.5" r="6.3" fill="#fff" stroke="#333" stroke-width="1.1"/><circle cx="7.6" cy="7.5" r="3.5" fill="#333"/></svg>
<span class="t" style="left:418.60px;top:245.00px;font-size:12px;line-height:14px;color:#000;letter-spacing:0.300px;">He<u>x</u>-values:</span>
<div style="left:419px;top:267px;width:177px;height:25px;background:#fff;border:1px solid #0078d7;"></div>
<span class="t" style="left:421.50px;top:272.00px;font-size:12px;line-height:14px;color:#000;transform-origin:0 0;transform:scaleX(0.900);">FF</span>
<svg style="left:402px;top:308px" width="15" height="15"><circle cx="7.5" cy="7.5" r="6.3" fill="#fff" stroke="#333" stroke-width="1.1"/></svg>
<span class="t" style="left:418.60px;top:309.00px;font-size:12px;line-height:14px;color:#000;letter-spacing:0.617px;"><u>R</u>andom bytes:</span>
<span class="t" style="left:418.60px;top:336.00px;font-size:12px;line-height:14px;color:#a0a0a0;letter-spacing:0.347px;">Range (decimal):</span>
<div style="left:515px;top:331px;width:33px;height:25px;background:#fff;border:1px solid #dadada;"></div>
<span class="t" style="left:538.60px;top:336.00px;font-size:12px;line-height:14px;color:#6d6d6d;transform-origin:0 0;transform:scaleX(0.900);">0</span>
<span class="t" style="left:554.60px;top:336.00px;font-size:12px;line-height:14px;color:#6d6d6d;">-</span>
<div style="left:563px;top:331px;width:33px;height:25px;background:#fff;border:1px solid #dadada;"></div>
<span class="t" style="left:572.50px;top:336.00px;font-size:12px;line-height:14px;color:#6d6d6d;">255</span>
<div style="left:219px;top:387px;width:385px;height:48px;border:1px solid #dcdcdc;"></div>
<div style="left:226.2px;top:380px;width:145.7px;height:14px;background:#f0f0f0;"></div>
<span class="t" style="left:227.20px;top:380.00px;font-size:12px;line-height:14px;color:#000;letter-spacing:0.577px;">Preset deletion methods</span>
<div style="left:316px;top:398px;width:87px;height:21px;background:#e1e1e1;border:1px solid #adadad;"></div>
<span class="t" style="left:330.00px;top:402.00px;font-size:12px;line-height:14px;color:#000;letter-spacing:0.537px;"><u>Z</u>erobytes</span>
<div style="left:420px;top:398px;width:87px;height:21px;background:#e1e1e1;border:1px solid #adadad;"></div>
<span class="t" style="left:420.70px;top:402.00px;font-size:12px;line-height:14px;color:#000;letter-spacing:0.431px;"><u>D</u>oD Sanitizing</span>
<div style="left:450px;top:468px;width:73px;height:21px;background:#e1e1e1;border:2px solid #0078d7;"></div>
<span class="t" style="left:477.40px;top:472.00px;font-size:12px;line-height:14px;color:#000;letter-spacing:0.600px;">OK</span>
<div style="left:530px;top:468px;width:73px;height:21px;background:#e1e1e1;border:1px solid #adadad;"></div>
<span class="t" style="left:547.20px;top:472.00px;font-size:12px;line-height:14px;color:#000;letter-spacing:0.020px;">Cancel</span>
<svg style="left:480px;top:465px" width="140" height="95" viewBox="480 465 140 95"><path d="M602.5 544.6 L523 488.5 L526.1 483.3 L501.5 478.6 L515.3 500.1 L518.1 494.8 L601.5 545.8 Z" fill="#f75454"/><path d="M602 545.1 L503 480.6" stroke="#c9b4b4" stroke-width="0.9" stroke-dasharray="3.5 2.5" fill="none"/><circle cx="499.1" cy="477.8" r="3.2" fill="#fff" stroke="#939393" stroke-width="1.3"/><circle cx="602" cy="545.1" r="3.2" fill="#fff" stroke="#939393" stroke-width="1.3"/></svg>
<div style="left:1061px;top:611px;width:2px;height:2px;background:#bcbcbc;"></div>
<div style="left:1061px;top:615px;width:2px;height:2px;background:#bcbcbc;"></div>
<div style="left:1061px;top:619px;width:2px;height:2px;background:#bcbcbc;"></div>
<div style="left:1057px;top:615px;width:2px;height:2px;background:#bcbcbc;"></div>
<div style="left:1057px;top:619px;width:2px;height:2px;background:#bcbcbc;"></div>
<div style="left:1053px;top:619px;width:2px;height:2px;background:#bcbcbc;"></div>
<div style="left:849px;top:584px;width:211px;height:35px;background:rgba(104,104,104,0.82);"></div>
<span class="t" style="left:857.06px;top:592.00px;font-size:20px;line-height:22px;color:#fff;transform-origin:0 0;transform:scaleX(0.940);">BIOS修复网 - biosfix.cn</span>
</body></html>
